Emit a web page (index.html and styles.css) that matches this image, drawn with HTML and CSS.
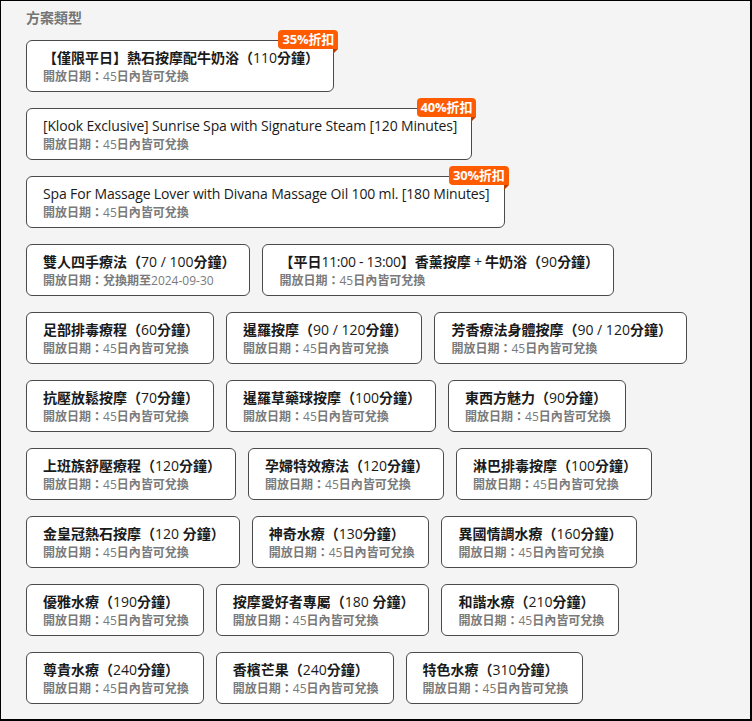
FILE: index.html
```html
<!DOCTYPE html>
<html lang="zh-Hant">
<head>
<meta charset="utf-8">
<title>方案類型</title>
<link rel="stylesheet" href="styles.css">
</head>
<body>
<div class="page">
  <div class="heading">方案類型</div>
  <div class="options">
    <div class="card">
      <span class="badge">35%折扣</span>
      <div class="title">【僅限平日】熱石按摩配牛奶浴（<span class="n">110</span>分鐘）</div>
      <div class="sub">開放日期：<span class="n">45</span>日內皆可兌換</div>
    </div>
    <div class="card">
      <span class="badge">40%折扣</span>
      <div class="title plain">[Klook Exclusive] Sunrise Spa with Signature Steam [120 Minutes]</div>
      <div class="sub">開放日期：<span class="n">45</span>日內皆可兌換</div>
    </div>
    <div class="card">
      <span class="badge">30%折扣</span>
      <div class="title plain">Spa For Massage Lover with Divana Massage Oil 100 ml. [180 Minutes]</div>
      <div class="sub">開放日期：<span class="n">45</span>日內皆可兌換</div>
    </div>
    <div class="card">
      <div class="title">雙人四手療法（<span class="n">70 / 100</span>分鐘）</div>
      <div class="sub">開放日期：兌換期至<span class="n">2024-09-30</span></div>
    </div>
    <div class="card">
      <div class="title">【平日<span class="n tight">11:00 - 13:00</span>】香薰按摩<span class="n tight"> + </span>牛奶浴（<span class="n">90</span>分鐘）</div>
      <div class="sub">開放日期：<span class="n">45</span>日內皆可兌換</div>
    </div>
    <div class="card">
      <div class="title">足部排毒療程（<span class="n">60</span>分鐘）</div>
      <div class="sub">開放日期：<span class="n">45</span>日內皆可兌換</div>
    </div>
    <div class="card">
      <div class="title">暹羅按摩（<span class="n">90 / 120</span>分鐘）</div>
      <div class="sub">開放日期：<span class="n">45</span>日內皆可兌換</div>
    </div>
    <div class="card">
      <div class="title">芳香療法身體按摩（<span class="n">90 / 120</span>分鐘）</div>
      <div class="sub">開放日期：<span class="n">45</span>日內皆可兌換</div>
    </div>
    <div class="card">
      <div class="title">抗壓放鬆按摩（<span class="n">70</span>分鐘）</div>
      <div class="sub">開放日期：<span class="n">45</span>日內皆可兌換</div>
    </div>
    <div class="card">
      <div class="title">暹羅草藥球按摩（<span class="n">100</span>分鐘）</div>
      <div class="sub">開放日期：<span class="n">45</span>日內皆可兌換</div>
    </div>
    <div class="card">
      <div class="title">東西方魅力（<span class="n">90</span>分鐘）</div>
      <div class="sub">開放日期：<span class="n">45</span>日內皆可兌換</div>
    </div>
    <div class="card">
      <div class="title">上班族舒壓療程（<span class="n">120</span>分鐘）</div>
      <div class="sub">開放日期：<span class="n">45</span>日內皆可兌換</div>
    </div>
    <div class="card">
      <div class="title">孕婦特效療法（<span class="n">120</span>分鐘）</div>
      <div class="sub">開放日期：<span class="n">45</span>日內皆可兌換</div>
    </div>
    <div class="card">
      <div class="title">淋巴排毒按摩（<span class="n">100</span>分鐘）</div>
      <div class="sub">開放日期：<span class="n">45</span>日內皆可兌換</div>
    </div>
    <div class="card">
      <div class="title">金皇冠熱石按摩（<span class="n">120 </span>分鐘）</div>
      <div class="sub">開放日期：<span class="n">45</span>日內皆可兌換</div>
    </div>
    <div class="card">
      <div class="title">神奇水療（<span class="n">130</span>分鐘）</div>
      <div class="sub">開放日期：<span class="n">45</span>日內皆可兌換</div>
    </div>
    <div class="card">
      <div class="title">異國情調水療（<span class="n">160</span>分鐘）</div>
      <div class="sub">開放日期：<span class="n">45</span>日內皆可兌換</div>
    </div>
    <div class="card">
      <div class="title">優雅水療（<span class="n">190</span>分鐘）</div>
      <div class="sub">開放日期：<span class="n">45</span>日內皆可兌換</div>
    </div>
    <div class="card">
      <div class="title">按摩愛好者專屬（<span class="n">180 </span>分鐘）</div>
      <div class="sub">開放日期：<span class="n">45</span>日內皆可兌換</div>
    </div>
    <div class="card">
      <div class="title">和諧水療（<span class="n">210</span>分鐘）</div>
      <div class="sub">開放日期：<span class="n">45</span>日內皆可兌換</div>
    </div>
    <div class="card">
      <div class="title">尊貴水療（<span class="n">240</span>分鐘）</div>
      <div class="sub">開放日期：<span class="n">45</span>日內皆可兌換</div>
    </div>
    <div class="card">
      <div class="title">香檳芒果（<span class="n">240</span>分鐘）</div>
      <div class="sub">開放日期：<span class="n">45</span>日內皆可兌換</div>
    </div>
    <div class="card">
      <div class="title">特色水療（<span class="n">310</span>分鐘）</div>
      <div class="sub">開放日期：<span class="n">45</span>日內皆可兌換</div>
    </div>
  </div>
</div>
</body>
</html>
```

FILE: styles.css
```css
html, body {
  margin: 0;
  padding: 0;
}

body {
  font-family: "Open Sans", "Noto Sans CJK TC", sans-serif;
  background: #f4f4f4;
}

.page {
  box-sizing: border-box;
  width: 752px;
  height: 721px;
  border-style: solid;
  border-color: #000;
  border-width: 1px 2px 2px 1px;
  background: #f4f4f4;
  padding: 7px 26px 0 25px;
  overflow: hidden;
}

.heading {
  font-size: 14px;
  line-height: 20px;
  font-weight: 700;
  color: #757575;
  margin-bottom: 12px;
}

.options {
  display: flex;
  flex-wrap: wrap;
  align-items: flex-start;
  gap: 16px 12px;
}

.card {
  position: relative;
  background: #fff;
  border: 1px solid #4a4a4a;
  border-radius: 6px;
  padding: 7px 14px 6px 16px;
  white-space: nowrap;
}

.title {
  font-size: 14px;
  line-height: 20px;
  font-weight: 700;
  color: #1a1a1a;
}

.title.plain {
  font-weight: 400;
  letter-spacing: -0.15px;
}

.sub {
  font-size: 12px;
  line-height: 17px;
  font-weight: 700;
  color: #7a7a7a;
}

.n {
  font-weight: 400;
}

.n.tight {
  letter-spacing: -0.3px;
}

.badge {
  position: absolute;
  top: -11px;
  right: -5px;
  height: 19px;
  line-height: 19px;
  padding: 0 4px;
  background: #ff5b00;
  color: #fff;
  font-size: 13px;
  font-weight: 700;
  letter-spacing: -0.2px;
  border-radius: 4px 4px 0 4px;
}

.badge::after {
  content: "";
  position: absolute;
  right: 0;
  top: 100%;
  width: 0;
  height: 0;
  border-top: 5px solid #b83f00;
  border-right: 5px solid transparent;
}
```
